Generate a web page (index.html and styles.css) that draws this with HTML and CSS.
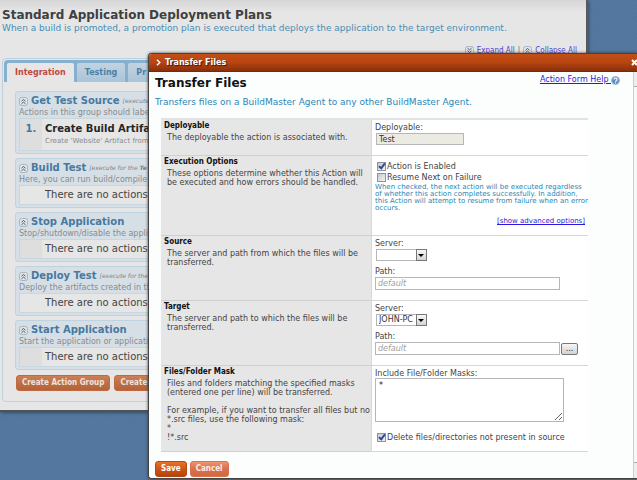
FILE: index.html
```html
<!DOCTYPE html>
<html lang="en">
<head>
<meta charset="utf-8">
<title>Standard Application Deployment Plans</title>
<link rel="stylesheet" href="styles.css">
</head>
<body>
<svg width="0" height="0" class="defs" aria-hidden="true">
  <symbol id="up" viewBox="0 0 9 9"><rect x=".5" y=".5" width="8" height="8" rx="2" fill="#e0e5e9" stroke="#a9b5bf"/><path d="M2.500 4.200l2-1.700 2 1.700M2.500 6.800l2-1.700 2 1.700" fill="none" stroke="#4a5862"/></symbol>
  <symbol id="down" viewBox="0 0 9 9"><rect x=".5" y=".5" width="8" height="8" rx="2" fill="#e0e5e9" stroke="#a9b5bf"/><path d="M2.500 2.200l2 1.700 2-1.700M2.500 4.800l2 1.700 2-1.700" fill="none" stroke="#4a5862"/></symbol>
</svg>

<main class="page">
  <h1>Standard Application Deployment Plans</h1>
  <p class="intro">When a build is promoted, a promotion plan is executed that deploys the application to the target environment.</p>
  <div class="toggles">
    <svg class="chev"><use href="#down"/></svg><a href="#">Expand All</a><span>|</span><svg class="chev"><use href="#up"/></svg><a href="#">Collapse All</a>
  </div>
  <div class="plans">
    <nav class="tabs">
      <a class="tab active" href="#">Integration</a>
      <a class="tab" href="#">Testing</a>
      <a class="tab" href="#">Pr</a>
    </nav>
    <div class="groups">
      <section class="group">
        <h2><svg class="chev"><use href="#up"/></svg>Get Test Source<i>[execute</i></h2>
        <p>Actions in this group should label</p>
        <div class="box action"><span class="num">1.</span><div><b>Create Build Artifac</b><small>Create 'Website' Artifact from</small></div></div>
      </section>
      <section class="group">
        <h2><svg class="chev"><use href="#up"/></svg>Build Test<i>[execute for the <b>Te</b></i></h2>
        <p>Here, you can run build/compile a</p>
        <div class="box plain">There are no actions</div>
      </section>
      <section class="group">
        <h2><svg class="chev"><use href="#up"/></svg>Stop Application</h2>
        <p>Stop/shutdown/disable the appli</p>
        <div class="box"><span class="num"></span><div>There are no actions</div></div>
      </section>
      <section class="group">
        <h2><svg class="chev"><use href="#up"/></svg>Deploy Test<i>[execute for the</i></h2>
        <p>Deploy the artifacts created in th</p>
        <div class="box plain">There are no actions</div>
      </section>
      <section class="group">
        <h2><svg class="chev"><use href="#up"/></svg>Start Application</h2>
        <p>Start the application or applicatio</p>
        <div class="box"><span class="num"></span><div>There are no actions</div></div>
      </section>
    </div>
    <div class="actions">
      <button class="btn dim" type="button">Create Action Group</button>
      <button class="btn dim" type="button">Create</button>
    </div>
  </div>
</main>

<div class="dialog" role="dialog" aria-labelledby="dialog-title">
  <header class="bar">
    <svg class="arrow" viewBox="0 0 5 7"><path d="M1 .8 3.8 3.5 1 6.2" fill="none" stroke="#fff" stroke-width="1.4"/></svg>
    <span>Transfer Files</span>
    <button class="close" type="button" aria-label="Close"><svg viewBox="0 0 7 7"><path d="M1 1l5 5M6 1 1 6" stroke="#fff" stroke-width="2"/></svg></button>
  </header>
  <div class="body">
    <form class="content">
      <div class="top">
        <h2 id="dialog-title">Transfer Files</h2>
        <a href="#" class="help">Action Form Help <svg viewBox="0 0 9 9"><circle cx="4.500" cy="4.500" r="4.200" fill="#5f8fc0"/><circle cx="4.500" cy="4.500" r="3.900" fill="none" stroke="#a9c5df" stroke-width=".8"/><path d="M3 3.500a1.500 1.400 0 1 1 2.200 1.200q-.7.400-.7 1M4.500 6.400v1" fill="none" stroke="#fff" stroke-width="1.100"/></svg></a>
      </div>
      <p class="lead">Transfers files on a BuildMaster Agent to any other BuildMaster Agent.</p>

      <div class="form">
        <div class="about"><h3>Deployable</h3><p>The deployable the action is associated with.</p></div>
        <div class="fields">
          <label for="deployable">Deployable:</label>
          <input class="text short" id="deployable" type="text" value="Test" disabled>
        </div>

        <div class="about"><h3>Execution Options</h3><p>These options determine whether this Action will be executed and how errors should be handled.</p></div>
        <div class="fields options">
          <label class="check"><input type="checkbox" checked>Action is Enabled</label>
          <label class="check"><input type="checkbox">Resume Next on Failure</label>
          <p class="hint">When checked, the next action will be executed regardless of whether this action completes successfully. In addition, this Action will attempt to resume from failure when an error occurs.</p>
          <a href="#" class="advanced">[show advanced options]</a>
        </div>

        <div class="about"><h3>Source</h3><p>The server and path from which the files will be transferred.</p></div>
        <div class="fields">
          <label for="source-server">Server:</label>
          <span class="select"><select id="source-server"><option></option><option>JOHN-PC</option></select></span>
          <label for="source-path" class="next">Path:</label>
          <input class="text" id="source-path" type="text" placeholder="default">
        </div>

        <div class="about"><h3>Target</h3><p>The server and path to which the files will be transferred.</p></div>
        <div class="fields">
          <label for="target-server">Server:</label>
          <span class="select"><select id="target-server"><option>JOHN-PC</option></select></span>
          <label for="target-path" class="next">Path:</label>
          <div class="pick"><input class="text" id="target-path" type="text" placeholder="default"><button type="button" class="browse">...</button></div>
        </div>

        <div class="about"><h3>Files/Folder Mask</h3><p>Files and folders matching the specified masks<br>(entered one per line) will be transferred.<br><br>For example, if you want to transfer all files but no<br>*.src files, use the following mask:<br>*<br>!*.src</p></div>
        <div class="fields">
          <label for="masks">Include File/Folder Masks:</label>
          <textarea id="masks">*</textarea>
          <label class="check delete"><input type="checkbox" checked>Delete files/directories not present in source</label>
        </div>
      </div>
      <div class="submit">
        <button class="btn" type="submit">Save</button>
        <button class="btn cancel" type="button">Cancel</button>
      </div>
    </form>
    <div class="scroll"><div class="thumb"></div></div>
  </div>
</div>
</body>
</html>
```
FILE: styles.css
```css
*, *::before, *::after { box-sizing: border-box; }
html, body { height: 100%; }
body {
  margin: 0;
  overflow: hidden;
  position: relative;
  background: repeating-linear-gradient(45deg, #51759c 0 1px, #54789f 1px 3px);
  font: 8px/9px "DejaVu Sans", Verdana, sans-serif;
  color: #444;
}
h1, h2, h3, p { margin: 0; }
a { color: #2a1ae0; }
button, input, select, textarea { font: inherit; margin: 0; }
.defs { position: absolute; }

/* Page behind the dialog */
.page {
  margin-right: 49px;
  padding: 8px 9px 8px 2px;
  border-right: 2px solid #57595c;
  border-bottom: 2px solid #4d5258;
  box-shadow: 1px 1px 3px #3c4c60;
  background: linear-gradient(#d6d6d6, #e6e6e6 12px);
}
h1 { font-size: 12px; line-height: 14px; color: #404040; }
.intro { font-size: 9px; line-height: 12px; color: #4a8db3; white-space: nowrap; }
.toggles {
  display: flex;
  justify-content: flex-end;
  align-items: center;
  gap: 3px;
  margin-top: 11px;
  height: 10px;
  color: #666;
  font-family: "DejaVu Sans Condensed", Verdana, sans-serif;
}
.toggles a { color: #5242cc; }
.chev { width: 9px; height: 9px; flex: none; }
.plans { margin-top: 3px; padding: 1px; border: 1px solid #bcd0de; border-radius: 4px; }
.tabs { display: flex; gap: 3px; padding: 3px 3px 0; background: #86b0d0; border-radius: 4px 4px 0 0; }
.tab {
  padding: 5px 8px;
  border-radius: 2px 2px 0 0;
  background: linear-gradient(#c3d3df, #aac4d8);
  color: #4c7fa5;
  font-weight: bold;
  text-decoration: none;
}
.tab.active { background: #e6e6e6; color: #c0483f; }
.groups { display: grid; gap: 4px; padding: 9px 8px 0 11px; }
.group {
  padding: 3px 4px 2px 3px;
  border: 1px solid #bfd2e0;
  border-radius: 3px;
  background: #d6dfe6;
  overflow: hidden;
  white-space: nowrap;
}
.group h2 { display: flex; align-items: center; gap: 3px; font-size: 10px; line-height: 12px; color: #46799f; }
.group i { font-size: 6px; color: #808080; font-weight: normal; }
.group p { color: #8a8a8a; line-height: 11px; }
.box { display: flex; align-items: center; min-height: 20px; border: 1px solid #c8d6e0; background: #e6e6e6; font-size: 10px; line-height: 12px; }
.box.plain { padding-left: 25px; }
.num { align-self: stretch; width: 22px; margin-right: 3px; background: #dedede; color: #46799f; font-weight: bold; text-align: center; }
.action { min-height: 33px; color: #262626; }
.action .num { padding-top: 4px; }
.action small { display: block; font-size: 7px; color: #8a8a8a; }
.actions { display: flex; gap: 4px; padding: 5px 12px 9px; }
.btn {
  height: 16px;
  padding: 0 5px;
  border: 1px solid #b04a14;
  border-radius: 3px;
  background: linear-gradient(#ec7226, #d0581a 45%, #b8430c);
  color: #fff;
  font: bold 8px/12px "DejaVu Sans Condensed", Verdana, sans-serif;
}
.btn.dim { border-color: #bd6a42; background: linear-gradient(#cd7f56, #c07045 45%, #b4623a); color: #ece4e0; }
.btn.cancel { border-color: #d9714c; background: linear-gradient(#ee9373, #db7250 45%, #d06a40); color: #fdeee6; }

/* Dialog */
.dialog {
  position: absolute;
  left: 148px;
  right: 0;
  top: 53px;
  border: 1px solid #444;
  border-width: 1px 0 1px 1px;
  border-radius: 4px 0 0 3px;
  overflow: hidden;
  background: #fcfefe;
  box-shadow: 0 0 3px #333;
}
.bar {
  display: flex;
  align-items: center;
  gap: 4px;
  height: 18px;
  padding-left: 7px;
  background: linear-gradient(#c24f18, #b84410 50%, #88300c);
  border-bottom: 1px solid #742a0c;
  color: #fff;
  font-weight: bold;
  text-shadow: 1px 1px 1px #401404;
}
.arrow { width: 5px; height: 7px; }
.close { margin: 0 -1px 0 auto; padding: 0; border: 0; background: none; }
.close svg { display: block; width: 7px; height: 7px; }
.body { display: flex; }
.content { flex: 1; min-width: 0; padding: 3px 6px 1px; }
.top { display: flex; justify-content: space-between; padding-right: 7px; }
.top h2 { font-size: 12px; line-height: 16px; color: #111; }
.help svg { width: 9px; height: 9px; vertical-align: -3px; }
.lead { margin-top: 5px; font-size: 9px; line-height: 12px; color: #2b86b5; }
.form {
  display: grid;
  grid-template-columns: 211px 1fr;
  margin: 10px 39px 9px 6px;
  border-top: 2px solid #e2e4e4;
}
.about { padding: 1px 0 0 3px; background: #e6e6e6; border-bottom: 1px solid #d0d0d0; border-right: 1px solid #d8d8d8; }
.about h3 { font: bold 8px/9px "DejaVu Sans Condensed", Verdana, sans-serif; color: #111; }
.about p { margin: 3px 0 0 3px; }
.fields { padding: 3px 0 10px 3px; background: #fff; border-bottom: 1px solid #d6d6d6; }
.fields label { display: block; }
.text { display: block; width: 185px; height: 13px; margin-top: 1px; padding: 0 2px; border: 1px solid #b4b6bc; background: #fff; color: #333; }
.text.short { width: 88px; height: 12px; margin-left: 1px; background: #ebebe4; }
.text::placeholder { color: #a0a0a0; font-style: italic; }
.options { padding: 5px 0 9px 3px; }
.fields .check { display: flex; align-items: center; height: 11px; }
.check input {
  appearance: none;
  width: 9px;
  height: 9px;
  margin: 0 1px 0 2px;
  border: 1px solid #8e949c;
  background: linear-gradient(135deg, #c4c8cc, #f4f4f4);
}
.check input:checked::after {
  content: "";
  display: block;
  width: 4px;
  height: 7px;
  margin: -1px 0 0 2px;
  border: solid #2e4c94;
  border-width: 0 2px 2px 0;
  transform: rotate(38deg);
}
.hint { margin-top: 1px; font-size: 7px; line-height: 7px; color: #2b86b5; }
.advanced { display: block; margin: 5px 3px 0 0; text-align: right; font-size: 7px; }
.select { display: block; position: relative; width: 51px; height: 12px; margin: 1px 0 0 1px; }
select { appearance: none; display: block; width: 100%; height: 100%; padding: 0 0 0 2px; border: 1px solid #b4b6bc; border-radius: 0; background: #fff; color: #333; line-height: 10px; }
.select::after {
  content: "";
  position: absolute;
  right: 0;
  top: 0;
  width: 11px;
  height: 12px;
  border: 1px solid #777;
  background: linear-gradient(#f6f6f6, #d4d4d4);
  pointer-events: none;
}
.select::before {
  content: "";
  position: absolute;
  z-index: 1;
  right: 3px;
  top: 5px;
  border: solid transparent;
  border-width: 3px 3px 0;
  border-top-color: #000;
  pointer-events: none;
}
.fields .next { margin-top: 6px; }
.pick { display: flex; align-items: center; gap: 1px; margin-top: 1px; }
.pick .text { margin-top: 0; }
.browse { width: 17px; height: 12px; padding: 0; border: 1px solid #777; border-radius: 2px; background: linear-gradient(#f6f6f6, #d2d2d2); color: #222; line-height: 8px; }
textarea { display: block; width: 189px; height: 44px; padding: 2px 3px; border: 1px solid #b4b6bc; background: #fff; color: #222; }
.fields .delete { margin: 10px 0 -2px; }
.submit { display: flex; gap: 3px; }
.scroll { flex: none; width: 4px; padding: 14px 0 15px; background: #eee; border-left: 1px solid #ccc; }
.thumb { height: 100%; background: #f8f8f8; border: solid #aaa; border-width: 1px 0; }
```
